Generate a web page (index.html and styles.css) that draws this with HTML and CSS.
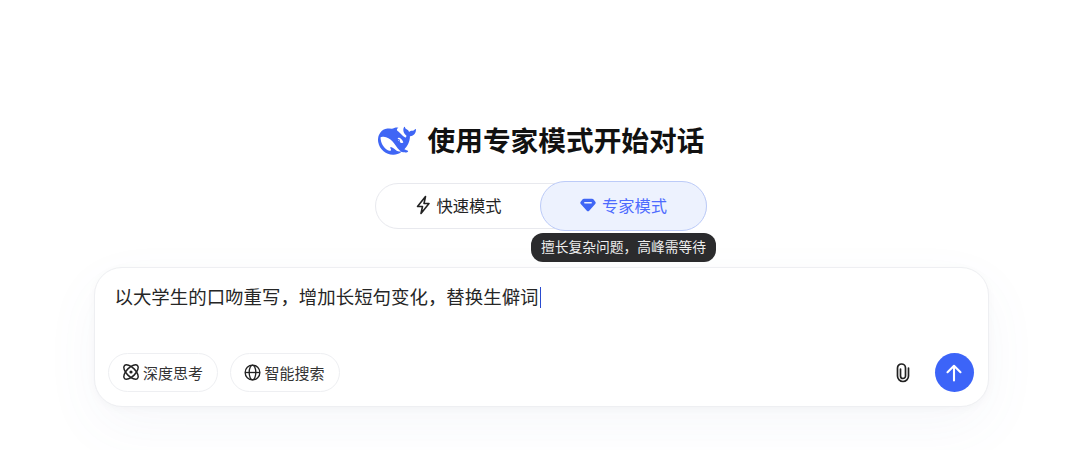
FILE: index.html
```html
<!DOCTYPE html>
<html lang="zh-CN">
<head>
  <meta charset="UTF-8" />
  <title>DeepSeek</title>
  <link rel="stylesheet" href="styles.css">
</head>
<body>
  <main class="page">
    <div class="title">
      <svg class="whale" viewBox="0 0 24 24" width="38" height="38">
        <path fill="#3f66f5" d="M23.748 4.482c-.254-.124-.364.113-.512.234-.051.039-.094.09-.137.136-.372.397-.806.657-1.373.626-.829-.046-1.537.214-2.163.848-.133-.782-.575-1.248-1.247-1.548-.352-.156-.708-.311-.955-.65-.172-.241-.219-.51-.305-.774-.055-.16-.11-.323-.293-.35-.2-.031-.278.136-.356.276-.313.572-.434 1.202-.422 1.84.027 1.436.633 2.58 1.838 3.393.137.093.172.187.129.323-.082.28-.18.552-.266.833-.055.179-.137.217-.329.14a5.526 5.526 0 01-1.736-1.18c-.857-.828-1.631-1.742-2.597-2.458a11.365 11.365 0 00-.689-.471c-.985-.957.13-1.743.388-1.836.27-.098.093-.432-.779-.428-.872.004-1.67.295-2.687.684a3.055 3.055 0 01-.465.137 9.597 9.597 0 00-2.883-.102c-1.885.21-3.39 1.102-4.497 2.623C.082 8.606-.231 10.684.152 12.85c.403 2.284 1.569 4.175 3.36 5.653 1.858 1.533 3.997 2.284 6.438 2.14 1.482-.085 3.133-.284 4.994-1.86.47.234.962.327 1.78.397.63.059 1.236-.03 1.705-.128.735-.156.684-.837.419-.961-2.155-1.004-1.682-.595-2.113-.926 1.096-1.296 2.746-2.642 3.392-7.003.05-.347.007-.565 0-.845-.004-.17.035-.237.23-.256a4.173 4.173 0 001.545-.475c1.396-.763 1.96-2.015 2.093-3.517.02-.23-.004-.467-.247-.588zM11.581 18c-2.089-1.642-3.102-2.183-3.52-2.16-.392.024-.321.471-.235.763.09.288.207.486.371.739.114.167.192.416-.113.603-.673.416-1.842-.14-1.897-.167-1.361-.802-2.5-1.86-3.301-3.307-.774-1.393-1.224-2.887-1.298-4.482-.02-.386.093-.522.477-.592a4.696 4.696 0 011.529-.039c2.132.312 3.946 1.265 5.468 2.774.868.86 1.525 1.887 2.202 2.891.72 1.066 1.494 2.082 2.48 2.914.348.292.625.514.891.677-.802.09-2.14.11-3.054-.614zm1-6.44a.306.306 0 01.415-.287.302.302 0 01.2.288.306.306 0 01-.31.307.303.303 0 01-.305-.308zm3.11 1.596c-.2.081-.399.151-.59.16a1.245 1.245 0 01-.798-.254c-.274-.23-.47-.358-.552-.758a1.73 1.730 0 01.016-.588c.07-.327-.008-.537-.239-.727-.187-.156-.426-.199-.688-.199a.559.559 0 01-.254-.078c-.11-.054-.2-.19-.114-.358.028-.054.16-.186.192-.21.356-.202.767-.136 1.146.016.352.144.618.408 1.001.782.391.451.462.576.685.914.176.265.336.537.445.848.067.195-.019.354-.25.452z"/>
      </svg>
      <h1>使用专家模式开始对话</h1>
    </div>

    <div class="modes">
      <button class="mode">
        <svg viewBox="0 0 16 20" width="16" height="20" fill="none" stroke="#222" stroke-width="1.600" stroke-linejoin="round"><path d="M10.500 1.500 2.500 11.500h5L6 18.500 14 8.500H9z"/></svg>
        快速模式
      </button>
      <button class="mode active">
        <svg viewBox="0 0 16 14" width="16" height="14"><path fill="#3f66f5" d="M4 .8h8c.700 0 1.200.200 1.600.700l1.700 2.200c.600.700.500 1.500-.100 2.200L9.200 12.700c-.700.700-1.700.700-2.400 0L.800 5.900C.200 5.200.100 4.400.700 3.700l1.700-2.200C2.800 1 3.300.8 4 .8z"/><path d="M4.800 4.700h6.400" stroke="#edf2fe" stroke-width="1.500" stroke-linecap="round"/></svg>
        专家模式
      </button>
      <div class="tooltip">擅长复杂问题，高峰需等待</div>
    </div>

    <section class="composer">
      <div class="prompt">以大学生的口吻重写，增加长短句变化，替换生僻词<span class="caret"></span></div>
      <div class="toolbar">
        <button class="chip">
          <svg viewBox="0 0 18 18" width="18" height="18" fill="none" stroke="#222" stroke-width="1.500"><ellipse cx="9" cy="9" rx="9.200" ry="4.400" transform="rotate(45 9 9)"/><ellipse cx="9" cy="9" rx="9.200" ry="4.400" transform="rotate(-45 9 9)"/><circle cx="9" cy="9" r="1.600" fill="#222" stroke="none"/></svg>
          深度思考
        </button>
        <button class="chip">
          <svg viewBox="0 0 18 18" width="17" height="17" fill="none" stroke="#222" stroke-width="1.400"><circle cx="9" cy="9" r="7.800"/><ellipse cx="9" cy="9" rx="3.500" ry="7.800"/><path d="M1.200 9h15.600"/></svg>
          智能搜索
        </button>
        <div class="spacer"></div>
        <svg class="clip" viewBox="0 0 16 21" width="16" height="21" fill="none" stroke="#222" stroke-width="1.700" stroke-linecap="round"><path d="M13.500 6v8a5.500 5.500 0 0 1-11 0V6a4 4 0 0 1 8 0v8a2.500 2.500 0 0 1-5 0V7"/></svg>
        <button class="send">
          <svg viewBox="0 0 20 20" width="20" height="20" fill="none" stroke="#fff" stroke-width="2.100" stroke-linecap="round" stroke-linejoin="round"><path d="M10 17.500V3M3.500 9.200 10 2.800l6.500 6.400"/></svg>
        </button>
      </div>
    </section>
  </main>
</body>
</html>
```

FILE: styles.css
```css
body {
  margin: 0;
  background-color: #fff;
  color: #222;
  font-family: "Inter", "Noto Sans CJK SC", sans-serif;
}

.page {
  display: flex;
  flex-direction: column;
  align-items: center;
  box-sizing: border-box;
  height: 450px;
  padding: 122px 0 0 2px;
  overflow: hidden;
}

button {
  font-family: inherit;
  cursor: pointer;
}

.title {
  display: flex;
  align-items: center;
  gap: 12px;
  height: 38px;
}

.title h1 {
  margin: 0;
  font-size: 27.700px;
  font-weight: 700;
  line-height: 36px;
  color: #111;
}

.modes {
  position: relative;
  display: flex;
  width: 332px;
  height: 46px;
  margin-top: 23px;
  border: 1px solid #e8e9ee;
  border-radius: 23px;
  box-sizing: border-box;
}

.mode {
  display: flex;
  align-items: center;
  justify-content: center;
  gap: 6px;
  flex: 1;
  padding: 0 0 2px;
  background: none;
  border: none;
  font-size: 16.250px;
  color: #222;
}

.mode.active {
  flex: none;
  width: 167px;
  height: 50px;
  margin: -3px -1px -3px 0;
  box-sizing: border-box;
  background-color: #edf2fe;
  border: 1px solid #bccbf8;
  border-radius: 25px;
  color: #4d6bfe;
}

.tooltip {
  position: absolute;
  top: 49px;
  left: 155px;
  padding: 0 10px;
  height: 29px;
  line-height: 28px;
  background-color: #2b2b2d;
  border-radius: 12px;
  color: #eee;
  font-size: 13.750px;
  white-space: nowrap;
}

.composer {
  display: flex;
  flex-direction: column;
  flex: none;
  width: 895px;
  height: 140px;
  margin-top: 38px;
  box-sizing: border-box;
  padding: 16px 14px 14px 13px;
  border: 1px solid #eeeff2;
  border-radius: 28px;
  background-color: #fff;
  box-shadow: 0 2px 8px rgba(0, 0, 0, 0.03), 0 20px 56px rgba(90, 110, 180, 0.05);
}

.prompt {
  padding-left: 7px;
  font-size: 18.450px;
  line-height: 26px;
  color: #262626;
}

.caret {
  display: inline-block;
  width: 1px;
  height: 21px;
  margin-left: 1px;
  vertical-align: -4px;
  background-color: #2a4bd0;
}

.toolbar {
  display: flex;
  align-items: center;
  gap: 12px;
  margin-top: auto;
}

.chip {
  display: flex;
  align-items: center;
  justify-content: center;
  gap: 3px;
  width: 110px;
  height: 39px;
  padding: 0 0 1px;
  background: #fff;
  border: 1px solid #eeeff2;
  border-radius: 20px;
  font-size: 15px;
  color: #333;
}

.spacer {
  flex: 1;
}

.clip {
  margin-right: 12px;
}

.send {
  display: flex;
  align-items: center;
  justify-content: center;
  width: 39px;
  height: 39px;
  padding: 0;
  border: none;
  border-radius: 50%;
  background-color: #3c64f8;
}
```
